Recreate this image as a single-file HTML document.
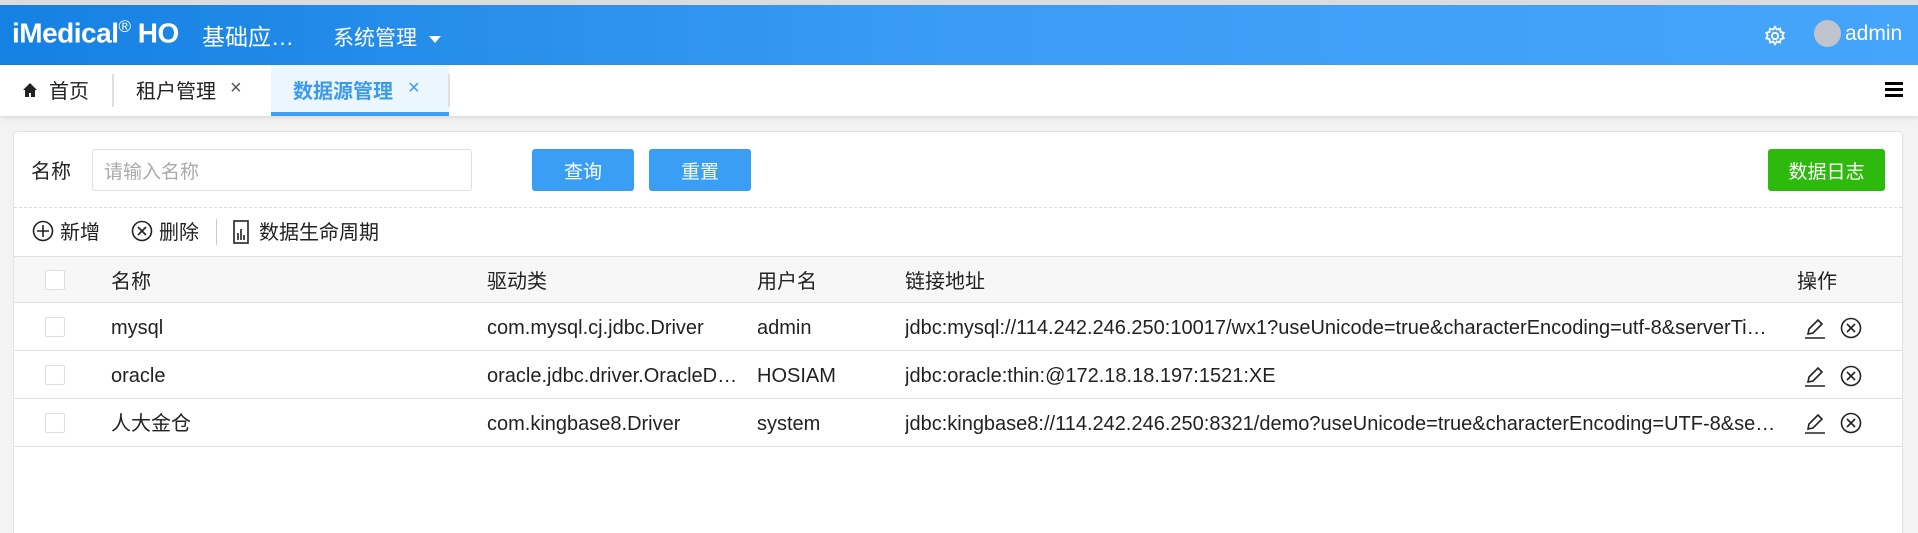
<!DOCTYPE html>
<html style="overflow:hidden;height:533px"><head><meta charset="utf-8"><style>
*{box-sizing:border-box;margin:0;padding:0}
body{width:1918px;height:533px;overflow:hidden;background:#f3f3f3;font-family:"Liberation Sans","Noto Sans CJK SC",sans-serif;color:#222;position:relative}
.abs{position:absolute}
.top{left:0;top:0;width:1918px;height:5px;background:#dcdcdc}
.hdr{left:0;top:5px;width:1918px;height:60px;background:linear-gradient(90deg,#1581e2,#3a9cf5 50%,#45a5fb);color:#fff}
.tabs{left:0;top:65px;width:1918px;height:51px;background:#fff;box-shadow:0 2px 4px rgba(0,0,0,.1)}
.card{left:13px;top:131px;width:1890px;height:402px;background:#fff;border:1px solid #e3e3e3;border-bottom:none;border-radius:5px 5px 0 0}
.btn{height:42px;border-radius:3px;color:#fff;font-size:19px;display:flex;align-items:center;justify-content:center}
.row{left:14px;width:1888px;border-bottom:1px solid #e2e2e2;font-size:20px}
.cell{position:absolute;top:2px;height:100%;line-height:46px;white-space:nowrap;overflow:hidden;text-overflow:ellipsis}
.cb{position:absolute;left:31px;width:20px;height:20px;border:1px solid #ddd;border-radius:2px;background:#fff}
</style></head><body>
<div class="abs top"></div>
<div class="abs hdr">
 <div class="abs" style="left:12px;top:12px;font-size:28px;font-weight:bold;letter-spacing:-0.5px">iMedical<sup style="font-size:17px;font-weight:normal">®</sup> HO</div>
 <div class="abs" style="left:202px;top:13px;font-size:23px">基础应…</div>
 <div class="abs" style="left:333px;top:17px;font-size:21px">系统管理</div>
 <div class="abs" style="left:429px;top:31px;border-left:6px solid transparent;border-right:6px solid transparent;border-top:7px solid #fff"></div>
 <svg class="abs" style="left:1764px;top:20px" width="22" height="22" viewBox="0 0 24 24" fill="none" stroke="#fff" stroke-width="2"><circle cx="12" cy="12" r="3.5"/><path d="M12 2l2 3 3.5-1 .5 3.5 3.5 1-1.5 3 1.5 3-3.5 1-.5 3.5-3.5-1-2 3-2-3-3.5 1-.5-3.5-3.5-1 1.5-3-1.5-3 3.5-1 .5-3.5 3.5 1z"/></svg>
 <div class="abs" style="left:1814px;top:15px;width:27px;height:27px;border-radius:50%;background:#c0c4cc"></div>
 <div class="abs" style="left:1845px;top:17px;font-size:21px">admin</div>
</div>
<div class="abs tabs">
 <svg class="abs" style="left:22px;top:17px" width="16" height="16" viewBox="0 0 16 16"><path d="M8 1L1 8h2v7h4v-4h2v4h4V8h2z" fill="#222"/></svg>
 <div class="abs" style="left:49px;top:10px;font-size:20px">首页</div>
 <div class="abs" style="left:112px;top:9px;width:2px;height:33px;background:#e0e0e0"></div>
 <div class="abs" style="left:136px;top:10px;font-size:20px">租户管理</div>
 <div class="abs" style="left:230px;top:12px;font-size:20px;color:#555">×</div>
 <div class="abs" style="left:271px;top:0;width:178px;height:51px;background:#ecf6ff;border-bottom:4px solid #3d9ff5"></div>
 <div class="abs" style="left:293px;top:10px;font-size:20px;color:#3a9af0;font-weight:bold">数据源管理</div>
 <div class="abs" style="left:408px;top:12px;font-size:20px;color:#3a9af0">×</div>
 <div class="abs" style="left:448px;top:9px;width:2px;height:33px;background:#e0e0e0"></div>
 <div class="abs" style="left:1885px;top:17px;width:18px;height:3px;background:#000;box-shadow:0 6px 0 #000,0 12px 0 #000"></div>
</div>
<div class="abs card"></div>
<div class="abs" style="left:31px;top:155px;font-size:20px">名称</div>
<div class="abs" style="left:92px;top:149px;width:380px;height:42px;border:1px solid #dcdfe6;border-radius:3px;font-size:19px;color:#aaa;padding:7px 11px">请输入名称</div>
<div class="abs btn" style="left:532px;top:149px;width:102px;background:#3a9ef5">查询</div>
<div class="abs btn" style="left:649px;top:149px;width:102px;background:#3a9ef5">重置</div>
<div class="abs btn" style="left:1768px;top:149px;width:117px;background:#2eba0c">数据日志</div>
<div class="abs" style="left:14px;top:207px;width:1888px;border-top:1px dashed #ddd"></div>
<svg class="abs" style="left:32px;top:220px" width="22" height="22" viewBox="0 0 22 22" fill="none" stroke="#222" stroke-width="1.6"><circle cx="11" cy="11" r="9.5"/><path d="M11 5v12M5 11h12"/></svg>
<div class="abs" style="left:60px;top:216px;font-size:20px">新增</div>
<svg class="abs" style="left:131px;top:220px" width="22" height="22" viewBox="0 0 22 22" fill="none" stroke="#222" stroke-width="1.6"><circle cx="11" cy="11" r="9.5"/><path d="M7 7l8 8M15 7l-8 8"/></svg>
<div class="abs" style="left:159px;top:216px;font-size:20px">删除</div>
<div class="abs" style="left:216px;top:219px;width:1px;height:26px;background:#ccc"></div>
<svg class="abs" style="left:233px;top:220px" width="16" height="24" viewBox="0 0 16 24" fill="none" stroke="#222" stroke-width="1.6"><rect x="1" y="1" width="14" height="22"/><path d="M5 13v7M8 9v11M11 15v5"/></svg>
<div class="abs" style="left:259px;top:216px;font-size:20px">数据生命周期</div>

<div class="abs row" style="top:256px;height:47px;background:#f7f7f7;border-top:1px solid #e2e2e2">
 <div class="cb" style="top:13px"></div>
 <div class="cell" style="left:97px">名称</div><div class="cell" style="left:473px">驱动类</div><div class="cell" style="left:743px">用户名</div><div class="cell" style="left:891px">链接地址</div><div class="cell" style="left:1783px">操作</div>
</div>
<div class="abs row" style="top:303px;height:48px">
 <div class="cb" style="top:14px"></div>
 <div class="cell" style="left:97px">mysql</div><div class="cell" style="left:473px">com.mysql.cj.jdbc.Driver</div><div class="cell" style="left:743px">admin</div><div class="cell" style="left:891px;width:871px">jdbc:mysql://114.242.246.250:10017/wx1?useUnicode=true&amp;characterEncoding=utf-8&amp;serverTimezone=GMT</div>
</div>
<div class="abs row" style="top:351px;height:48px">
 <div class="cb" style="top:14px"></div>
 <div class="cell" style="left:97px">oracle</div><div class="cell" style="left:473px;width:252px">oracle.jdbc.driver.OracleDriver</div><div class="cell" style="left:743px">HOSIAM</div><div class="cell" style="left:891px">jdbc:oracle:thin:@172.18.18.197:1521:XE</div>
</div>
<div class="abs row" style="top:399px;height:48px">
 <div class="cb" style="top:14px"></div>
 <div class="cell" style="left:97px">人大金仓</div><div class="cell" style="left:473px">com.kingbase8.Driver</div><div class="cell" style="left:743px">system</div><div class="cell" style="left:891px;width:871px">jdbc:kingbase8://114.242.246.250:8321/demo?useUnicode=true&amp;characterEncoding=UTF-8&amp;serverTimezone=GMT</div>
</div>
<svg class="abs" width="0" height="0"><defs>
<g id="ed" fill="none" stroke="#222" stroke-width="1.6"><path d="M4 17l1-5 9-9 4 4-9 9z"/><path d="M1 21h20"/></g>
<g id="dl" fill="none" stroke="#222" stroke-width="1.6"><circle cx="11" cy="11" r="9.5"/><path d="M7 7l8 8M15 7l-8 8"/></g></defs></svg>
<svg class="abs" style="left:1804px;top:317px" width="22" height="22"><use href="#ed"/></svg>
<svg class="abs" style="left:1840px;top:317px" width="22" height="22"><use href="#dl"/></svg>
<svg class="abs" style="left:1804px;top:365px" width="22" height="22"><use href="#ed"/></svg>
<svg class="abs" style="left:1840px;top:365px" width="22" height="22"><use href="#dl"/></svg>
<svg class="abs" style="left:1804px;top:412px" width="22" height="22"><use href="#ed"/></svg>
<svg class="abs" style="left:1840px;top:412px" width="22" height="22"><use href="#dl"/></svg>
</body></html>
